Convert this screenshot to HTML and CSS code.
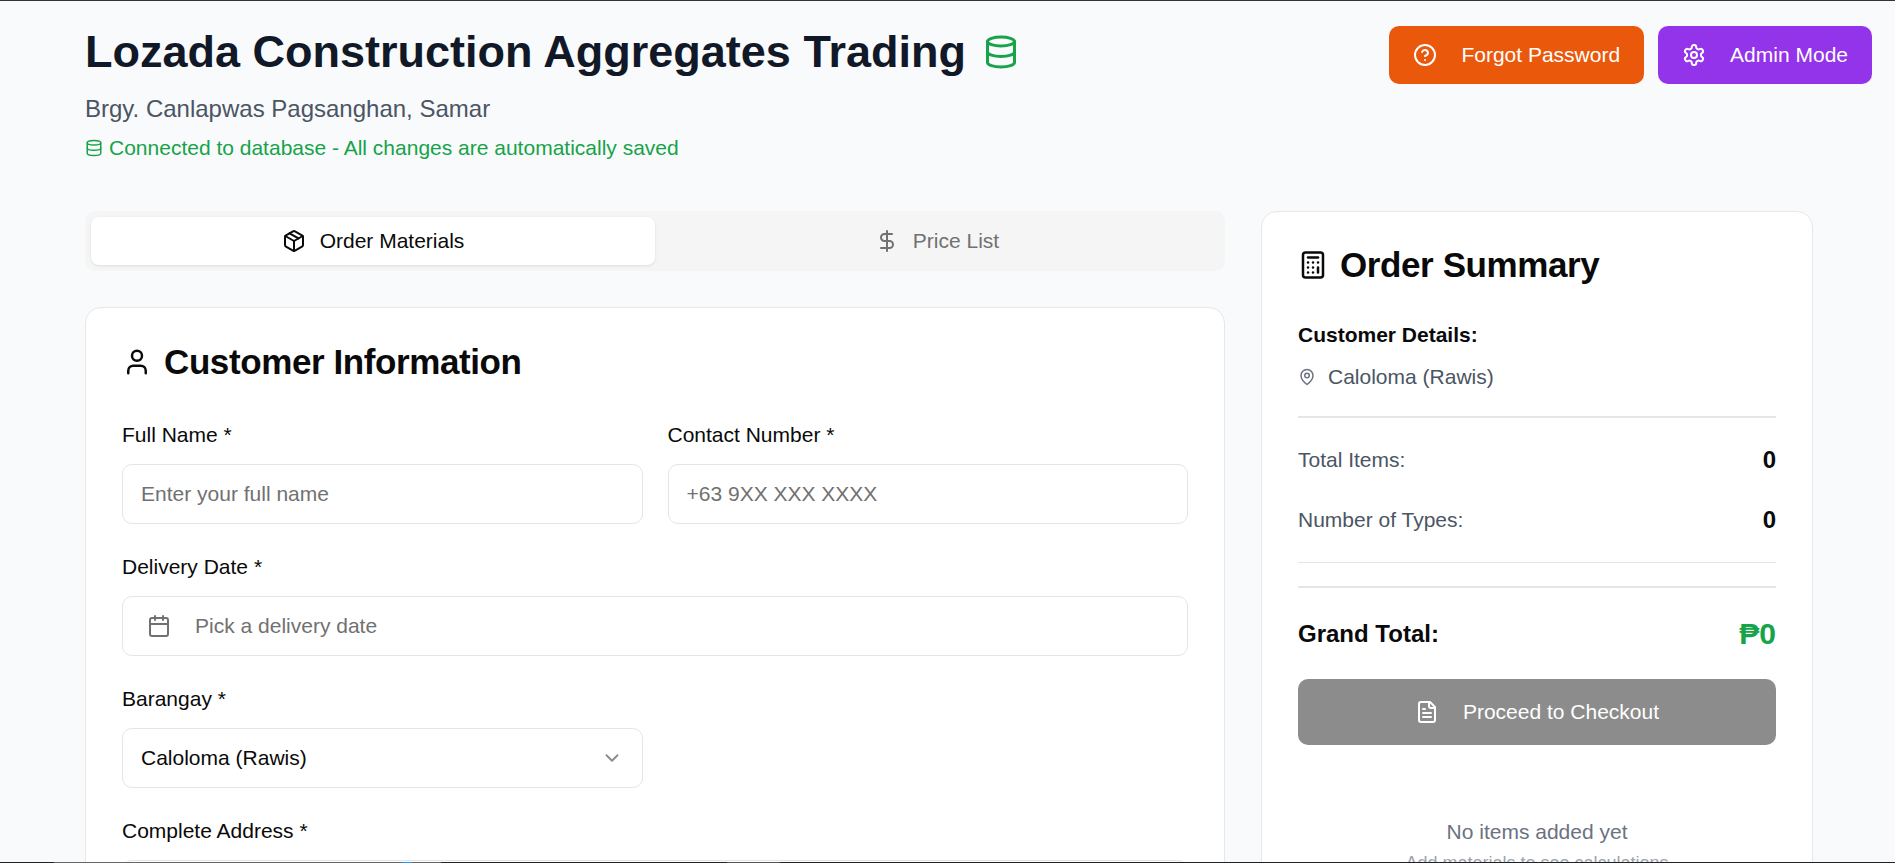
FILE: index.html
```html
<!DOCTYPE html>
<html lang="en">

<head>
    <meta charset="UTF-8">
    <meta name="viewport" content="width=device-width, initial-scale=1.0">
    <title>Lozada Construction Aggregates Trading</title>
    <link rel="stylesheet" href="styles.css">
</head>

<body>
    <div class="top-line"></div>

    <div class="top-actions">
        <button class="btn btn-orange">
            <svg class="icon" viewBox="0 0 24 24"><circle cx="12" cy="12" r="10"/><path d="M9.09 9a3 3 0 0 1 5.83 1c0 2-3 3-3 3"/><path d="M12 17h.01"/></svg>
            Forgot Password
        </button>
        <button class="btn btn-purple">
            <svg class="icon" viewBox="0 0 24 24"><path d="M12.22 2h-.44a2 2 0 0 0-2 2v.18a2 2 0 0 1-1 1.73l-.43.25a2 2 0 0 1-2 0l-.15-.08a2 2 0 0 0-2.73.73l-.22.38a2 2 0 0 0 .73 2.73l.15.1a2 2 0 0 1 1 1.72v.51a2 2 0 0 1-1 1.74l-.15.09a2 2 0 0 0-.73 2.73l.22.38a2 2 0 0 0 2.73.73l.15-.08a2 2 0 0 1 2 0l.43.25a2 2 0 0 1 1 1.73V20a2 2 0 0 0 2 2h.44a2 2 0 0 0 2-2v-.18a2 2 0 0 1 1-1.73l.43-.25a2 2 0 0 1 2 0l.15.08a2 2 0 0 0 2.73-.73l.22-.39a2 2 0 0 0-.73-2.73l-.15-.08a2 2 0 0 1-1-1.74v-.5a2 2 0 0 1 1-1.74l.15-.09a2 2 0 0 0 .73-2.73l-.22-.38a2 2 0 0 0-2.73-.73l-.15.08a2 2 0 0 1-2 0l-.43-.25a2 2 0 0 1-1-1.73V4a2 2 0 0 0-2-2z"/><circle cx="12" cy="12" r="3"/></svg>
            Admin Mode
        </button>
    </div>

    <div class="page">
        <header class="header">
            <h1>Lozada Construction Aggregates Trading
                <svg class="icon icon-title" viewBox="0 0 24 24"><ellipse cx="12" cy="5" rx="9" ry="3"/><path d="M3 5v14a9 3 0 0 0 18 0V5"/><path d="M3 12a9 3 0 0 0 18 0"/></svg>
            </h1>
            <p class="address">Brgy. Canlapwas Pagsanghan, Samar</p>
            <p class="status">
                <svg class="icon icon-status" viewBox="0 0 24 24"><ellipse cx="12" cy="5" rx="9" ry="3"/><path d="M3 5v14a9 3 0 0 0 18 0V5"/><path d="M3 12a9 3 0 0 0 18 0"/></svg>
                Connected to database - All changes are automatically saved
            </p>
        </header>

        <div class="columns">
            <main class="main">
                <div class="tabs">
                    <div class="tab active">
                        <svg class="icon icon-tab" viewBox="0 0 24 24"><path d="M11 21.73a2 2 0 0 0 2 0l7-4A2 2 0 0 0 21 16V8a2 2 0 0 0-1-1.73l-7-4a2 2 0 0 0-2 0l-7 4A2 2 0 0 0 3 8v8a2 2 0 0 0 1 1.73z"/><path d="M12 22V12"/><path d="m3.3 7 8.7 5 8.7-5"/><path d="m7.5 4.27 9 5.15"/></svg>
                        Order Materials
                    </div>
                    <div class="tab">
                        <svg class="icon icon-tab" viewBox="0 0 24 24"><line x1="12" x2="12" y1="2" y2="22"/><path d="M17 5H9.5a3.5 3.5 0 0 0 0 7h5a3.5 3.5 0 0 1 0 7H6"/></svg>
                        Price List
                    </div>
                </div>

                <section class="card form-card">
                    <h2>
                        <svg class="icon icon-head" viewBox="0 0 24 24"><path d="M19 21v-2a4 4 0 0 0-4-4H9a4 4 0 0 0-4 4v2"/><circle cx="12" cy="7" r="4"/></svg>
                        Customer Information
                    </h2>

                    <div class="grid-2">
                        <div class="field">
                            <label>Full Name *</label>
                            <input class="input" placeholder="Enter your full name">
                        </div>
                        <div class="field">
                            <label>Contact Number *</label>
                            <input class="input" placeholder="+63 9XX XXX XXXX">
                        </div>
                    </div>

                    <div class="field">
                        <label>Delivery Date *</label>
                        <div class="input date-input">
                            <svg class="icon icon-date" viewBox="0 0 24 24"><path d="M8 2v4"/><path d="M16 2v4"/><rect width="18" height="18" x="3" y="4" rx="2"/><path d="M3 10h18"/></svg>
                            Pick a delivery date
                        </div>
                    </div>

                    <div class="grid-2">
                        <div class="field">
                            <label>Barangay *</label>
                            <div class="input select-input">
                                Caloloma (Rawis)
                                <svg class="icon icon-chevron" viewBox="0 0 24 24"><path d="m6 9 6 6 6-6"/></svg>
                            </div>
                        </div>
                    </div>

                    <div class="field">
                        <label>Complete Address *</label>
                        <div class="input"></div>
                    </div>
                </section>
            </main>

            <aside class="card summary">
                <h2 class="summary-title">
                    <svg class="icon icon-calc" viewBox="0 0 24 24"><rect width="16" height="20" x="4" y="2" rx="2"/><line x1="8" x2="16" y1="6" y2="6"/><line x1="16" x2="16" y1="14" y2="18"/><path d="M16 10h.01"/><path d="M12 10h.01"/><path d="M8 10h.01"/><path d="M12 14h.01"/><path d="M8 14h.01"/><path d="M12 18h.01"/><path d="M8 18h.01"/></svg>
                    Order Summary
                </h2>

                <div class="customer-details">
                    <h3>Customer Details:</h3>
                    <p class="location">
                        <svg class="icon icon-pin" viewBox="0 0 24 24"><path d="M20 10c0 6-8 12-8 12s-8-6-8-12a8 8 0 0 1 16 0Z"/><circle cx="12" cy="10" r="3"/></svg>
                        Caloloma (Rawis)
                    </p>
                </div>

                <div class="stats">
                    <div class="stat-row"><span>Total Items:</span><b>0</b></div>
                    <div class="stat-row"><span>Number of Types:</span><b>0</b></div>
                </div>

                <div class="grand-total">
                    <span>Grand Total:</span>
                    <span class="amount">₱0</span>
                </div>

                <button class="btn btn-checkout">
                    <svg class="icon" viewBox="0 0 24 24"><path d="M15 2H6a2 2 0 0 0-2 2v16a2 2 0 0 0 2 2h12a2 2 0 0 0 2-2V7Z"/><path d="M14 2v4a2 2 0 0 0 2 2h4"/><path d="M10 9H8"/><path d="M16 13H8"/><path d="M16 17H8"/></svg>
                    Proceed to Checkout
                </button>

                <div class="empty">
                    <p>No items added yet</p>
                    <p class="empty-sub">Add materials to see calculations</p>
                </div>
            </aside>
        </div>
    </div>

    <div class="bottom-line"></div>
</body>

</html>
```

FILE: styles.css
```css
* {
    margin: 0;
    padding: 0;
    box-sizing: border-box;
}

html,
body {
    height: 863px;
    overflow: hidden;
}

body {
    background-color: #f9fafb;
    color: #0a0a0a;
    font-family: "Liberation Sans", Arial, sans-serif;
    font-size: 21px;
}

.icon {
    fill: none;
    stroke: currentColor;
    stroke-width: 2;
    stroke-linecap: round;
    stroke-linejoin: round;
    flex-shrink: 0;
}

/* thin dark lines from the capture */
.top-line,
.bottom-line {
    position: absolute;
    left: 0;
    width: 100%;
    z-index: 5;
}

.top-line {
    top: 0;
    height: 1px;
    background-color: #333;
}

.bottom-line {
    bottom: 0;
    height: 1px;
    background: linear-gradient(to right,
            #222 54px, #666 54px, #666 402px, #2196f3 402px, #2196f3 412px, #666 412px,
            #666 441px, #222 441px, #222 727px, #555 727px, #555 780px, #222 780px);
}

.top-actions {
    position: absolute;
    top: 26px;
    right: 23px;
    display: flex;
    gap: 14px;
}

.btn {
    display: flex;
    align-items: center;
    justify-content: center;
    gap: 24px;
    height: 58px;
    padding: 0 24px;
    border: none;
    border-radius: 10px;
    color: #fff;
    font-family: inherit;
    font-size: 21px;
}

.btn .icon {
    width: 24px;
    height: 24px;
}

.btn-orange {
    background-color: #ea580c;
}

.btn-purple {
    background-color: #9333ea;
}

.page {
    padding: 28px 82px 0 85px;
}

.header h1 {
    display: flex;
    align-items: center;
    gap: 17px;
    height: 48px;
    color: #111827;
    font-size: 45px;
    font-weight: 700;
}

.icon-title {
    width: 36px;
    height: 36px;
    color: #16a34a;
}

.address {
    margin-top: 19px;
    color: #4b5563;
    font-size: 24px;
    line-height: 28px;
}

.status {
    display: flex;
    align-items: center;
    gap: 6px;
    margin-top: 12px;
    color: #16a34a;
    font-size: 21px;
    line-height: 26px;
}

.icon-status {
    width: 18px;
    height: 18px;
}

.columns {
    display: flex;
    gap: 36px;
    margin-top: 50px;
}

.main {
    width: 1140px;
}

.tabs {
    display: flex;
    height: 60px;
    padding: 6px;
    background-color: #f5f5f5;
    border-radius: 10px;
}

.tab {
    flex: 1;
    display: flex;
    align-items: center;
    justify-content: center;
    gap: 14px;
    border-radius: 8px;
    color: #717171;
    font-size: 21px;
}

.tab.active {
    background-color: #fff;
    color: #0a0a0a;
    box-shadow: 0 1px 3px rgba(0, 0, 0, 0.1);
}

.icon-tab {
    width: 24px;
    height: 24px;
}

.card {
    background-color: #fff;
    border: 1px solid #e5e7eb;
    border-radius: 16px;
}

.form-card {
    margin-top: 36px;
    padding: 33px 36px 36px;
    height: 700px;
}

.form-card h2,
.summary-title {
    display: flex;
    align-items: center;
    font-weight: 700;
    font-size: 35px;
    letter-spacing: -0.4px;
}

.form-card h2 {
    gap: 12px;
    height: 42px;
}

.icon-head {
    width: 30px;
    height: 30px;
}

.grid-2 {
    display: grid;
    grid-template-columns: 1fr 1fr;
    gap: 25px;
}

.field {
    margin-top: 31px;
}

.form-card h2 + .grid-2 .field {
    margin-top: 40px;
}

.field label {
    display: block;
    height: 24px;
    margin-bottom: 17px;
    font-size: 21px;
    line-height: 24px;
}

.input {
    display: flex;
    align-items: center;
    width: 100%;
    height: 60px;
    padding: 0 18px;
    background-color: #fff;
    border: 1px solid #e5e5e5;
    border-radius: 10px;
    font-family: inherit;
    font-size: 21px;
    color: #0a0a0a;
}

.input::placeholder {
    color: #717171;
}

.date-input {
    gap: 24px;
    padding-left: 24px;
    color: #717171;
}

.icon-date {
    width: 24px;
    height: 24px;
}

.select-input {
    justify-content: space-between;
    padding-left: 18px;
    padding-right: 19px;
}

.icon-chevron {
    width: 22px;
    height: 22px;
    color: #8a8a8a;
}

.summary {
    width: 552px;
    height: 700px;
    padding: 32px 36px;
}

.summary-title {
    gap: 12px;
    height: 42px;
}

.icon-calc {
    width: 30px;
    height: 30px;
}

.customer-details {
    padding-bottom: 27px;
    margin-top: 37px;
    border-bottom: 2px solid #e5e5e5;
}

.customer-details h3 {
    font-size: 21px;
    font-weight: 700;
    line-height: 24px;
}

.location {
    display: flex;
    align-items: center;
    gap: 12px;
    margin-top: 18px;
    color: #4b5563;
    font-size: 21px;
    line-height: 24px;
}

.icon-pin {
    width: 18px;
    height: 18px;
    color: #6b7280;
}

.stats {
    padding: 29px 0 29px;
    border-bottom: 1px solid #e5e5e5;
}

.stat-row {
    display: flex;
    justify-content: space-between;
    align-items: center;
    height: 26px;
    margin-bottom: 34px;
    color: #4b5563;
}

.stat-row:last-child {
    margin-bottom: 0;
}

.stat-row b {
    color: #0a0a0a;
    font-size: 24px;
}

.grand-total {
    display: flex;
    justify-content: space-between;
    align-items: center;
    margin-top: 23px;
    padding-top: 29px;
    border-top: 2px solid #e5e5e5;
    font-size: 24px;
    font-weight: 700;
}

.amount {
    color: #16a34a;
    font-size: 30px;
}

.btn-checkout {
    width: 100%;
    height: 66px;
    margin-top: 28px;
    background-color: #8c8c8c;
}

.empty {
    margin-top: 75px;
    text-align: center;
    color: #6b7280;
}

.empty-sub {
    margin-top: 9px;
    color: #9ca3af;
    font-size: 18px;
}
```
